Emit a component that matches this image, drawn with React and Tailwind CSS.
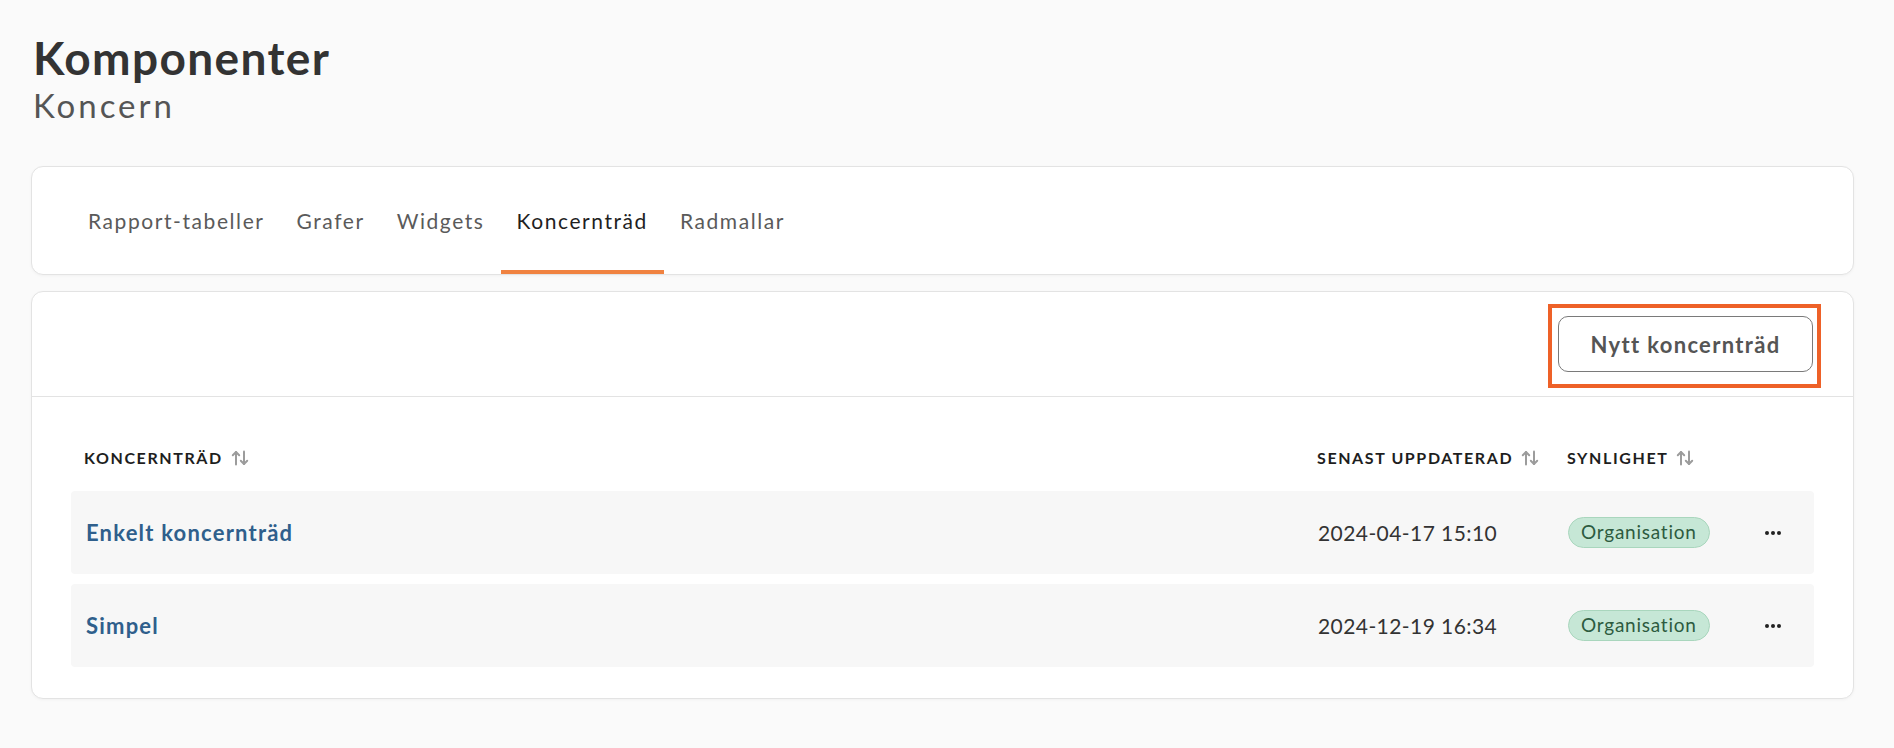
const tabs = ['Rapport-tabeller', 'Grafer', 'Widgets', 'Koncernträd', 'Radmallar'];

const rows = [
  { name: 'Enkelt koncernträd', updated: '2024-04-17 15:10', visibility: 'Organisation' },
  { name: 'Simpel', updated: '2024-12-19 16:34', visibility: 'Organisation' },
];

// up arrow on the left, down arrow on the right
const SortIcon = () => (
  <svg
    className="ml-[8px] h-[16px] w-[18px] text-[#9c9c9c]"
    viewBox="0 0 18 16"
    fill="none"
    stroke="currentColor"
    strokeWidth="2"
    strokeLinecap="round"
    strokeLinejoin="round"
  >
    <path d="M5 14.5V2" />
    <path d="M1.8 5.2 5 2l3.2 3.2" />
    <path d="M13 1.5V14" />
    <path d="M9.8 10.8 13 14l3.2-3.2" />
  </svg>
);

const Dots = () => (
  <span className="flex items-center gap-[2px]">
    <span className="h-[4px] w-[4px] rounded-full bg-[#222]" />
    <span className="h-[4px] w-[4px] rounded-full bg-[#222]" />
    <span className="h-[4px] w-[4px] rounded-full bg-[#222]" />
  </span>
);

export default function App() {
  return (
    <div className="min-h-[748px] bg-[#fafafa] pl-[31px] pr-[40px] pt-[30px] pb-10 font-['Lato',sans-serif] text-[#333]">
      {/* ── HEADER ── */}
      <h1 className="pl-[2px] text-[46px] font-bold leading-[56px] tracking-[0.03em] text-[#333]">Komponenter</h1>
      <p className="pl-[2px] text-[33px] leading-[38px] tracking-[0.09em] text-[#555]">Koncern</p>

      {/* ── TABS ── */}
      <div className="mt-[42px] h-[109px] rounded-xl border border-[#e3e3e3] bg-white px-10 shadow-[0_1px_3px_rgba(0,0,0,0.04)]">
        <div className="flex h-full">
          {tabs.map((tab) => {
            const active = tab === 'Koncernträd';
            return (
              <div
                key={tab}
                className={
                  active
                    ? 'flex h-full items-center border-b-4 border-[#f08240] px-4 pt-1 text-[21px] tracking-[0.075em] text-[#1f1f1f]'
                    : 'flex h-full items-center border-b-4 border-transparent px-4 pt-1 text-[21px] tracking-[0.075em] text-[#5a5a5a]'
                }
              >
                {tab}
              </div>
            );
          })}
        </div>
      </div>

      {/* ── LIST CARD ── */}
      <div className="mt-[16px] rounded-xl border border-[#e3e3e3] bg-white shadow-[0_1px_3px_rgba(0,0,0,0.04)]">
        <div className="flex justify-end border-b border-[#e3e3e3] px-10 py-[24px]">
          <div className="relative">
            <button className="h-[56px] w-[255px] rounded-[10px] border border-[#7a7a7a] bg-white text-[22px] font-bold tracking-[0.06em] text-[#555]">
              Nytt koncernträd
            </button>
            <span className="pointer-events-none absolute -top-[12px] -bottom-[16px] -left-[10px] -right-[8px] border-4 border-[#ee6128]" />
          </div>
        </div>

        <div className="px-[39px] pt-[38px] pb-[31px]">
          {/* header */}
          <div className="grid h-[46px] grid-cols-[1fr_250px_188px_76px] items-center text-[16px] font-bold uppercase tracking-[0.1em] text-[#1e1e1e]">
            <div className="flex items-center pl-[13px]">
              Koncernträd
              <SortIcon />
            </div>
            <div className="flex items-center pl-[17px]">
              Senast uppdaterad
              <SortIcon />
            </div>
            <div className="flex items-center pl-[17px]">
              Synlighet
              <SortIcon />
            </div>
            <div />
          </div>

          {/* rows */}
          <div className="mt-[10px] flex flex-col gap-[10px]">
            {rows.map((row) => (
              <div
                key={row.name}
                className="grid h-[83px] grid-cols-[1fr_250px_188px_76px] items-center rounded-[4px] bg-[#f7f7f7]"
              >
                <div className="pl-[15px] text-[22px] font-bold tracking-[0.055em] text-[#2f5f8c]">{row.name}</div>
                <div className="pl-[18px] text-[21px] tracking-[0.02em] text-[#333]">{row.updated}</div>
                <div className="pl-[18px]">
                  <span className="inline-flex h-[31px] items-center rounded-full border border-[#a9d6bd] bg-[#c6e7d6] px-[12px] text-[19px] tracking-[0.04em] text-[#2d5b3f]">
                    {row.visibility}
                  </span>
                </div>
                <div className="flex justify-center pr-[6px]">
                  <Dots />
                </div>
              </div>
            ))}
          </div>
        </div>
      </div>
    </div>
  );
}
